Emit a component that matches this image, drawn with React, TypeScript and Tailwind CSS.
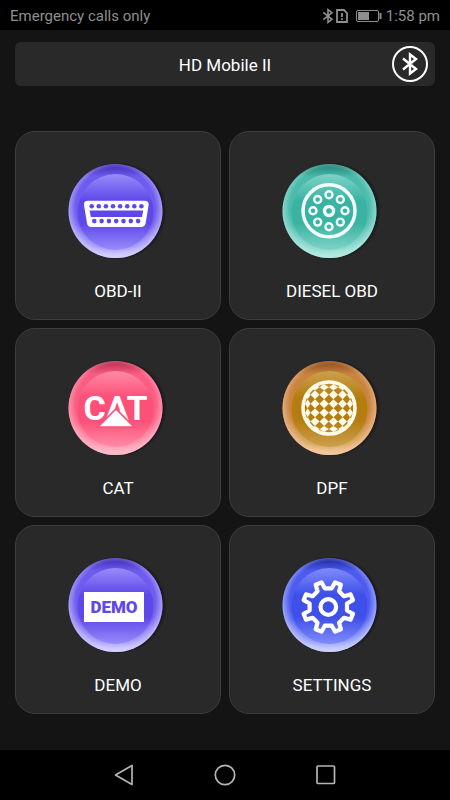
import type { ReactNode } from 'react'

type Tone = { id: string; top: string; mid: string; base: string; glow: string; rim: string }

const violet: Tone = { id: 'violet', top: '#3f2cb4', mid: '#5f48ea', base: '#6e5cee', glow: '#988cf9', rim: '#d6d1ff' }
const tones: Record<string, Tone> = {
  obd: { ...violet, id: 'obd' },
  diesel: { id: 'diesel', top: '#1f8275', mid: '#3bb3a3', base: '#4dbbac', glow: '#7dd3c7', rim: '#b4ebe2' },
  cat: { id: 'cat', top: '#b52a4e', mid: '#fc5078', base: '#fb5c82', glow: '#ff8aa5', rim: '#ffbccb' },
  dpf: { id: 'dpf', top: '#8a4a1c', mid: '#b57d10', base: '#c98440', glow: '#cba04c', rim: '#f7c9a2' },
  demo: { ...violet, id: 'demo' },
  settings: { id: 'settings', top: '#1c269c', mid: '#3f50ea', base: '#4d5cee', glow: '#808cfa', rim: '#cdd3ff' },
}

function Orb({ tone, children }: { tone: Tone; children: ReactNode }) {
  const { id } = tone
  return (
    <svg width="100" height="100" viewBox="0 0 100 100" aria-hidden="true">
      <defs>
        <linearGradient id={`${id}-body`} x1="0" y1="0" x2="0" y2="1">
          <stop offset="0" stopColor={tone.top} />
          <stop offset="0.14" stopColor={tone.base} />
          <stop offset="0.65" stopColor={tone.base} />
          <stop offset="0.88" stopColor={tone.glow} />
          <stop offset="1" stopColor={tone.rim} />
        </linearGradient>
        <radialGradient id={`${id}-edge`} cx="0.5" cy="0.46" r="0.54">
          <stop offset="0.78" stopColor={tone.rim} stopOpacity="0" />
          <stop offset="1" stopColor={tone.rim} stopOpacity="0.85" />
        </radialGradient>
        <linearGradient id={`${id}-lens`} x1="0" y1="0" x2="0" y2="1">
          <stop offset="0" stopColor={tone.glow} />
          <stop offset="0.35" stopColor={tone.mid} />
          <stop offset="0.65" stopColor={tone.mid} />
          <stop offset="1" stopColor={tone.glow} />
        </linearGradient>
        <radialGradient id={`${id}-shadow`}>
          <stop offset="0.88" stopColor="#0b0b14" stopOpacity="0.8" />
          <stop offset="1" stopColor="#0b0b14" stopOpacity="0" />
        </radialGradient>
      </defs>
      <circle cx="50" cy="48" r="49" fill={`url(#${id}-shadow)`} />
      <circle cx="47.5" cy="48" r="47" fill={`url(#${id}-body)`} />
      <circle cx="47.5" cy="48" r="47" fill={`url(#${id}-edge)`} />
      <circle cx="47.5" cy="49" r="38" fill={`url(#${id}-lens)`} />
      {children}
    </svg>
  )
}

function ObdIcon() {
  return (
    <g fill={violet.mid}>
      <path d="M20 37.7H76.5Q81.3 37.7 80.6 42.3L77.6 60.2Q76.8 64 73 64H23.4Q19.7 64 19 60.2L16 42.3Q15.4 37.7 20 37.7Z" fill="#fff" />
      <path d="M21.6 47.6H75.2L74 54H22.8Z" />
      {Array.from({ length: 8 }, (_, i) => <circle key={i} cx={23.7 + i * 7.1} cy="43.3" r="2.3" />)}
      {Array.from({ length: 7 }, (_, i) => <circle key={i} cx={26.3 + i * 7.3} cy="58.1" r="2.3" />)}
    </g>
  )
}

function DieselIcon() {
  return (
    <g fill="none" stroke="#f4fffd">
      <circle cx="47" cy="47.8" r="26" strokeWidth="3.5" />
      <circle cx="47" cy="48" r="4.5" strokeWidth="3.4" />
      {Array.from({ length: 8 }, (_, i) => {
        const a = (i * Math.PI) / 4
        return <circle key={i} cx={47 + 16 * Math.cos(a)} cy={47.8 + 16 * Math.sin(a)} r="3.5" strokeWidth="2.4" />
      })}
    </g>
  )
}

function CatIcon() {
  return (
    <g fill="#fff">
      <text x="47.5" y="60" textAnchor="middle" fontSize="34" fontWeight="700" fontFamily="Roboto, sans-serif">CAT</text>
      <path d="M30 67L48 49L66 67Z" stroke="#fc5078" strokeWidth="1.6" />
    </g>
  )
}

// cell edges shrink toward the rim so the mesh reads as a dome
const meshX = [23, 28.5, 37.5, 46.8, 56.1, 65, 71]
const meshY = [24, 30.3, 39.2, 48.2, 57.2, 66, 72]

function DpfIcon() {
  return (
    <g fill="#fffbe8">
      {meshX.slice(0, -1).map((x0, i) =>
        meshY.slice(0, -1).map((y0, j) => {
          const x1 = meshX[i + 1]
          const y1 = meshY[j + 1]
          const cx = (x0 + x1) / 2
          const cy = (y0 + y1) / 2
          if (Math.hypot(cx - 47, cy - 48) > 27) return null
          return <polygon key={`${i}-${j}`} points={`${cx},${y0} ${x1},${cy} ${cx},${y1} ${x0},${cy}`} />
        })
      )}
      <circle cx="47" cy="48" r="26" fill="none" stroke="#fffbe8" strokeWidth="3.6" />
    </g>
  )
}

function DemoIcon() {
  return (
    <g>
      <rect x="16" y="35" width="60" height="30" fill="#fff" />
      <text x="46" y="56" textAnchor="middle" fontSize="17" fontWeight="900" fill={violet.mid} fontFamily="Roboto, sans-serif">DEMO</text>
    </g>
  )
}

const gearPoints = Array.from({ length: 8 }, (_, k) =>
  [[-12, 19], [-7, 25.6], [7, 25.6], [12, 19]].map(([offset, r]) => {
    const a = ((k * 45 + 22.5 + offset) * Math.PI) / 180
    return `${(46.3 + r * Math.sin(a)).toFixed(2)},${(50 - r * Math.cos(a)).toFixed(2)}`
  }).join(' ')
).join(' ')

function GearIcon() {
  return (
    <g fill="none" stroke="#fff" strokeWidth="4.2" strokeLinejoin="round">
      <polygon points={gearPoints} />
      <circle cx="46.3" cy="50" r="7.8" />
    </g>
  )
}

function BluetoothGlyph({ size, width }: { size: number; width: number }) {
  return (
    <svg width={size} height={size} viewBox="0 0 24 24" fill="none" stroke="currentColor" strokeWidth={width} aria-hidden="true">
      <path d="M5 6.5L18 17L12 21.5V2.5L18 7L5 17.5" />
    </svg>
  )
}

const tiles = [
  { label: 'OBD-II', tone: tones.obd, icon: <ObdIcon /> },
  { label: 'DIESEL OBD', tone: tones.diesel, icon: <DieselIcon /> },
  { label: 'CAT', tone: tones.cat, icon: <CatIcon /> },
  { label: 'DPF', tone: tones.dpf, icon: <DpfIcon /> },
  { label: 'DEMO', tone: tones.demo, icon: <DemoIcon /> },
  { label: 'SETTINGS', tone: tones.settings, icon: <GearIcon /> },
]

function StatusBar() {
  return (
    <div className="flex h-[30px] items-center justify-between bg-black px-[10px] pt-0.5 text-[15px] text-[#8f8f8f]">
      <span>Emergency calls only</span>
      <div className="flex items-center">
        <BluetoothGlyph size={16} width={2.4} />
        <svg width="12" height="14" viewBox="0 0 12 14" fill="none" stroke="currentColor" strokeWidth="1.8" aria-hidden="true">
          <path d="M1 1H8L11 4V13H1Z M6 4V8 M6 9.2V11" />
        </svg>
        <svg className="ml-2 mr-1" width="26" height="12" viewBox="0 0 26 12" aria-hidden="true">
          <rect x="0.5" y="0.5" width="22" height="11" rx="1.5" fill="none" stroke="currentColor" />
          <rect x="2" y="2" width="11" height="8" fill="currentColor" />
          <rect x="23.5" y="3" width="2" height="6" fill="currentColor" />
        </svg>
        <span>1:58 pm</span>
      </div>
    </div>
  )
}

export default function App() {
  return (
    <div className="flex min-h-screen flex-col bg-[#141414] font-['Roboto',sans-serif]">
      <StatusBar />
      <main className="flex flex-1 flex-col px-[15px] pt-3 pb-9">
        <header className="grid h-11 grid-cols-[36px_1fr_36px] items-center rounded-md bg-[#292929] px-[7px]">
          <h1 className="col-start-2 pt-1 text-center text-[17px] text-white">HD Mobile II</h1>
          <button aria-label="Bluetooth" className="flex size-9 items-center justify-center rounded-full border-2 border-white text-white">
            <BluetoothGlyph size={24} width={2.4} />
          </button>
        </header>
        <div className="mt-[45px] grid flex-1 grid-cols-2 gap-2">
          {tiles.map((tile) => (
            <button key={tile.label} className="flex flex-col items-center rounded-[20px] border border-[#3d3d3d] bg-[#292929] pt-[31px] pb-4 text-[17px] text-white">
              <Orb tone={tile.tone}>{tile.icon}</Orb>
              <span className="mt-4 leading-6">{tile.label}</span>
            </button>
          ))}
        </div>
      </main>
      <nav className="flex h-[50px] items-center justify-center gap-20 bg-black text-[#b5b5b5]">
        <button aria-label="Back">
          <svg width="20" height="22" viewBox="0 0 20 22" fill="none" stroke="currentColor" strokeWidth="1.7" strokeLinejoin="round"><path d="M18 1.5V20.5L1.5 11Z" /></svg>
        </button>
        <button aria-label="Home">
          <svg width="22" height="22" viewBox="0 0 22 22" fill="none" stroke="currentColor" strokeWidth="1.7"><circle cx="11" cy="11" r="9.7" /></svg>
        </button>
        <button aria-label="Recent apps">
          <svg width="20" height="20" viewBox="0 0 20 20" fill="none" stroke="currentColor" strokeWidth="1.7"><rect x="1" y="1" width="17.5" height="17.5" rx="1" /></svg>
        </button>
      </nav>
    </div>
  )
}
